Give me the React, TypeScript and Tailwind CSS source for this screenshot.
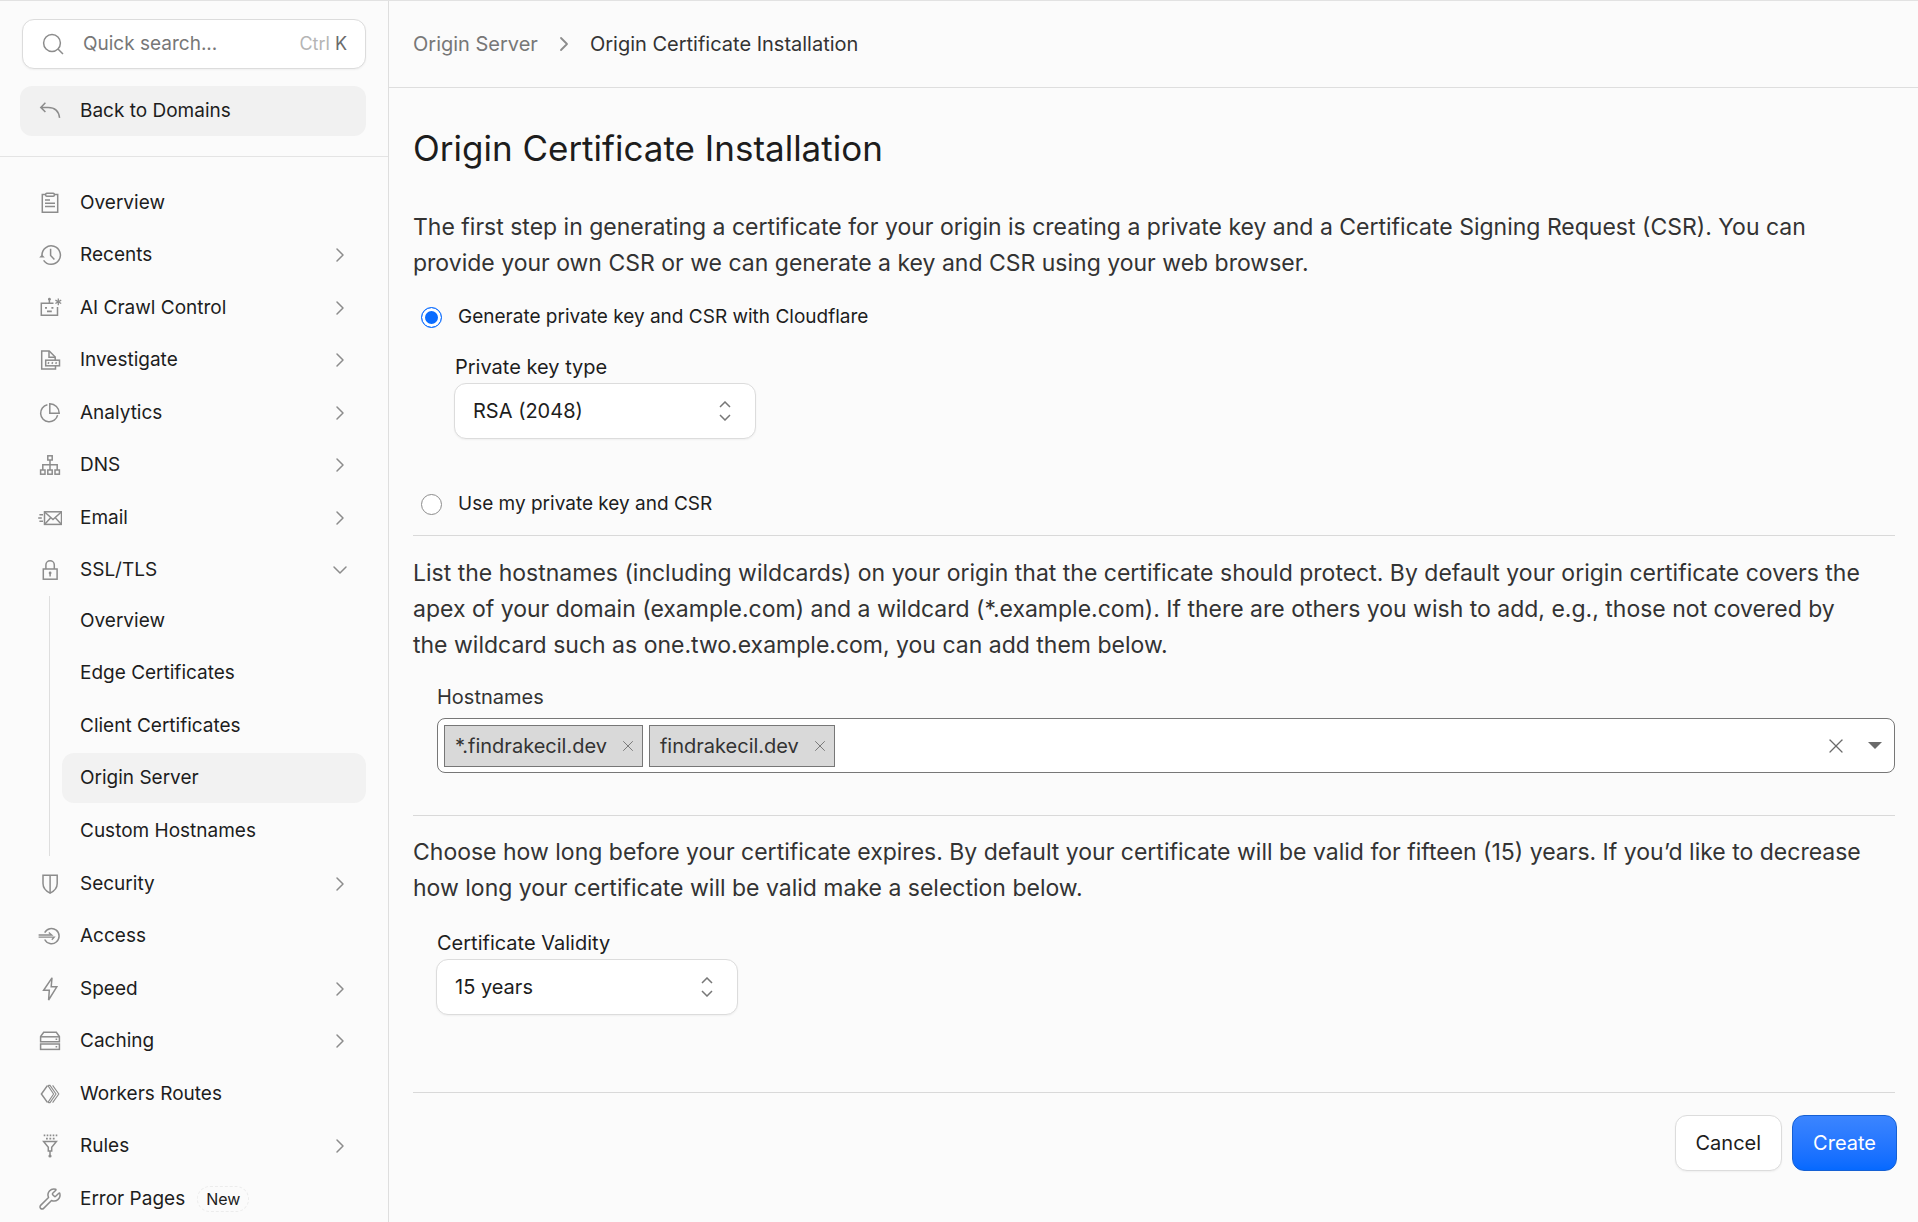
import React, { useState } from 'react';
import { ChevronDown, ChevronRight, Wrench, X } from 'lucide-react';

type IconProps = { children: React.ReactNode };

const Icon = ({ children }: IconProps) => (
  <svg
    className="w-6 h-6 shrink-0 text-[#8c8c8c]"
    viewBox="0 0 24 24"
    fill="none"
    stroke="currentColor"
    strokeWidth="1.5"
    aria-hidden="true"
  >
    {children}
  </svg>
);

const icons = {
  search: (
    <Icon>
      <circle cx="11" cy="11" r="8.4" />
      <path d="M17 17l5 5" />
    </Icon>
  ),
  back: (
    <Icon>
      <path d="M7.4 3.8L2.8 8.4l4.6 4.6M2.8 8.4h7.4c6.4 0 10.6 3.8 11.4 10.4" />
    </Icon>
  ),
  overview: (
    <Icon>
      <path d="M7.7 3.6H4.3v17.6h15.4V3.6h-3.4" />
      <rect x="7.7" y="2.2" width="8.6" height="3" rx="1" />
      <path d="M7 9h5M7 12.3h10M7 15.6h10" />
    </Icon>
  ),
  recents: (
    <Icon>
      <path d="M4 12.5a9.2 9.2 0 1 1 1.6 4.8" />
      <path d="M12.6 5.8v6.6l3.8 4" />
      <path d="M1.2 14.6L4 11.6l2.8 3z" fill="currentColor" stroke="none" />
    </Icon>
  ),
  crawl: (
    <Icon>
      <path d="M15.5 7.3H3.3v12h16.2V11" />
      <path d="M11.4 7.3V3" />
      <circle cx="11.4" cy="3.2" r="1.4" fill="currentColor" stroke="none" />
      <path d="M7 11.8h2M13.4 11.8h2M9 15.4h4.8" strokeWidth="1.8" />
      <path d="M20.3 2.4v6.8M17.4 4.1l5.8 3.4M23.2 4.1l-5.8 3.4" strokeWidth="1.3" />
    </Icon>
  ),
  investigate: (
    <Icon>
      <path d="M17.2 12V9l-6-6H3.7v18h13.8v-3" />
      <path d="M11 3v6.2h6.2" />
      <rect x="7.7" y="12.2" width="13.8" height="5.6" />
      <path d="M10 15.7l1-1.4M13.8 15.7l1-1.4M17.6 15.7l1-1.4" />
    </Icon>
  ),
  analytics: (
    <Icon>
      <path d="M9.4 3.8a8.6 8.6 0 1 0 10.2 10.4" />
      <path d="M11.8 2.8v9.4h9.4a9.4 9.4 0 0 0-9.4-9.4z" />
    </Icon>
  ),
  dns: (
    <Icon>
      <rect x="9.8" y="2.8" width="4.4" height="4.2" />
      <rect x="2.6" y="17" width="4.4" height="4.2" />
      <rect x="9.8" y="17" width="4.4" height="4.2" />
      <rect x="17" y="17" width="4.4" height="4.2" />
      <path d="M12 7v10M4.8 17v-5.3h14.4V17" />
    </Icon>
  ),
  email: (
    <Icon>
      <rect x="6.5" y="5.8" width="17" height="12.6" />
      <path d="M6.7 6l8.3 7.6L23.3 6M6.7 18.2l6-6.4M23.3 18.2l-6-6.4" />
      <path d="M1.4 8.7H5M.2 12h3.6M1.4 15.3H5" />
    </Icon>
  ),
  lock: (
    <Icon>
      <rect x="5.3" y="11" width="13.8" height="10.2" />
      <path d="M7.9 11V7a4.2 4.2 0 0 1 8.4 0v4" />
      <path d="M12.1 15v3.4" />
      <circle cx="12.1" cy="15" r="1.4" fill="currentColor" stroke="none" />
    </Icon>
  ),
  shield: (
    <Icon>
      <path d="M5 3.2h14.2v8.4c0 4.8-3 7.6-7.1 9.6C8 19.2 5 16.4 5 11.6z" />
      <path d="M12.1 3.2v18" />
    </Icon>
  ),
  access: (
    <Icon>
      <path d="M6.7 8.7a7.6 7.6 0 1 1 0 6.8" />
      <path d="M.6 11h13.2l-3-2.6M.6 13.2h15.6l-2.4 2.6" strokeWidth="1.3" />
    </Icon>
  ),
  speed: (
    <Icon>
      <path d="M14 .8L5.6 13.3h5.7L10.6 23l8.2-13.2h-5.6z" />
    </Icon>
  ),
  caching: (
    <Icon>
      <path d="M5.7 3.3h12.6l3.1 4.2v5.2H2.6V7.5z" />
      <path d="M2.6 7.8h18.8" />
      <rect x="2.6" y="15" width="18.8" height="5.4" />
      <path d="M17.6 10.3h1.6M17.6 17.7h1.6" />
    </Icon>
  ),
  workers: (
    <Icon>
      <path d="M9.4 3.6L3.4 12l6 8.4" />
      <path d="M10.4 3.4h1.6l6 8.6-6 8.6h-1.600M14.600 3.400l6.200 8.600-6.200 8.600M9.800 3.400l5.800 8.600-5.800 8.600" strokeWidth="1.1" />
    </Icon>
  ),
  rules: (
    <Icon>
      <path d="M5.7 1.4h13.6" strokeWidth="1.8" strokeDasharray="1.6 1.4" />
      <path d="M8 4.6h9" strokeWidth="1.8" strokeDasharray="1.8 1.6" />
      <path d="M5.6 7.4h12.8l-4.7 5.8v3.9h-3.4v-3.9z" />
      <path d="M12 17v5" />
      <circle cx="12" cy="22" r="1.6" fill="currentColor" stroke="none" />
    </Icon>
  ),
  wrench: <Wrench className="w-6 h-6 shrink-0 text-[#8c8c8c]" strokeWidth={1.5} />,
};

type NavItem = {
  label: string;
  icon: React.ReactNode;
  expandable?: boolean;
  badge?: string;
  children?: string[];
};

const navItems: NavItem[] = [
  { label: 'Overview', icon: icons.overview },
  { label: 'Recents', icon: icons.recents, expandable: true },
  { label: 'AI Crawl Control', icon: icons.crawl, expandable: true },
  { label: 'Investigate', icon: icons.investigate, expandable: true },
  { label: 'Analytics', icon: icons.analytics, expandable: true },
  { label: 'DNS', icon: icons.dns, expandable: true },
  { label: 'Email', icon: icons.email, expandable: true },
  {
    label: 'SSL/TLS',
    icon: icons.lock,
    expandable: true,
    children: ['Overview', 'Edge Certificates', 'Client Certificates', 'Origin Server', 'Custom Hostnames'],
  },
  { label: 'Security', icon: icons.shield, expandable: true },
  { label: 'Access', icon: icons.access },
  { label: 'Speed', icon: icons.speed, expandable: true },
  { label: 'Caching', icon: icons.caching, expandable: true },
  { label: 'Workers Routes', icon: icons.workers },
  { label: 'Rules', icon: icons.rules, expandable: true },
  { label: 'Error Pages', icon: icons.wrench, badge: 'New' },
];

const rowClass = 'flex w-full items-center gap-[18px] h-[50px] px-[18px] rounded-xl text-left hover:bg-[#f2f2f2]';

const NavRow = ({ item }: { item: NavItem }) => {
  const content = (
    <>
      {item.icon}
      <span className="flex items-center gap-3">
        {item.label}
        {item.badge && (
          <span className="px-2 text-base rounded-full border border-dashed border-[#ececec]">{item.badge}</span>
        )}
      </span>
    </>
  );

  if (!item.expandable) {
    return (
      <a href="#" className={rowClass}>
        {content}
      </a>
    );
  }

  return (
    <button type="button" aria-expanded={!!item.children} className={rowClass}>
      {content}
      {item.children ? (
        <ChevronDown size={24} strokeWidth={1.5} className="ml-auto -mr-1 text-[#8c8c8c]" />
      ) : (
        <ChevronRight size={24} strokeWidth={1.5} className="ml-auto -mr-1 text-[#8c8c8c]" />
      )}
    </button>
  );
};

const Sidebar = () => (
  <aside className="flex flex-col w-[389px] shrink-0 border-r border-[#dedede] overflow-y-auto [scrollbar-width:none] text-[19px] leading-7 text-[#1d1d1d]">
    <div className="pl-5 pr-[22px] pt-[18px] pb-5 border-b border-[#e4e4e4]">
      <label className="flex items-center gap-[18px] h-[50px] ml-[2px] px-[18px] rounded-xl bg-white border border-[#dcdcdc] shadow-xs">
        {icons.search}
        <input
          type="text"
          aria-label="Quick search"
          placeholder="Quick search..."
          className="min-w-0 flex-1 bg-transparent outline-none placeholder:text-[#777777]"
        />
        <span className="text-lg text-[#b5b5b5]">
          Ctrl <span className="text-[#6b6b6b]">K</span>
        </span>
      </label>
      <a href="#" className="flex items-center gap-[18px] h-[50px] mt-[17px] pl-[18px] rounded-xl bg-[#f1f1f1]">
        {icons.back}
        <span>Back to Domains</span>
      </a>
    </div>

    <nav className="pl-5 pr-[22px] pt-[21px]">
      <ul>
        {navItems.map((item) => (
          <li key={item.label} className="odd:mb-[2px] even:mb-[3px]">
            <NavRow item={item} />
            {item.children && (
              <ul className="mt-px ml-[29px] pl-3 border-l border-[#dedede]">
                {item.children.map((child) => (
                  <li key={child} className="odd:mb-[2px] even:mb-[3px] last:mb-0">
                    <a
                      href="#"
                      className={`flex items-center h-[50px] pl-[18px] rounded-xl ${
                        child === 'Origin Server' ? 'bg-[#f2f2f2]' : 'hover:bg-[#f2f2f2]'
                      }`}
                    >
                      {child}
                    </a>
                  </li>
                ))}
              </ul>
            )}
          </li>
        ))}
      </ul>
    </nav>
  </aside>
);

type SelectFieldProps = { id: string; label: string; options: string[] };

const SelectField = ({ id, label, options }: SelectFieldProps) => (
  <div className="flex flex-col">
    <label htmlFor={id} className="px-px text-xl leading-8 text-[#1d1d1d]">
      {label}
    </label>
    <div className="relative w-[302px]">
      <select
        id={id}
        className="w-full h-14 pl-[18px] pr-14 appearance-none rounded-xl bg-white border border-[#dcdcdc] shadow-xs text-xl text-[#1d1d1d]"
      >
        {options.map((option) => (
          <option key={option}>{option}</option>
        ))}
      </select>
      <svg
        className="absolute right-[25px] top-[18px] w-3 h-5 text-[#777777] pointer-events-none"
        viewBox="0 0 12 20"
        fill="none"
        stroke="currentColor"
        strokeWidth="1.5"
        aria-hidden="true"
      >
        <path d="M1 6l5-5 5 5M1 14l5 5 5-5" />
      </svg>
    </div>
  </div>
);

const radioClass =
  'appearance-none w-[21px] h-[21px] rounded-full bg-white border border-[#8c8c8c] checked:border-[#0a6cff] checked:bg-[#0a6cff] checked:shadow-[inset_0_0_0_3px_white]';

const Paragraph = ({ children }: { children: React.ReactNode }) => (
  <p className="pr-4 text-[23px] leading-9 text-[#333333]">{children}</p>
);

export default function App() {
  const [keySource, setKeySource] = useState('cloudflare');
  const [hostnames, setHostnames] = useState(['*.findrakecil.dev', 'findrakecil.dev']);

  return (
    <div className="flex h-screen bg-[#fbfbfb] border-t border-[#e2e2e2] font-['Inter',sans-serif] text-[#1d1d1d]">
      <Sidebar />

      <div className="flex flex-col flex-1 min-w-0 overflow-y-auto">
        {/* Breadcrumbs */}
        <header className="flex items-center gap-[14px] h-[87px] shrink-0 px-6 border-b border-[#dedede] text-xl">
          <a href="#" className="text-[#777777]">
            Origin Server
          </a>
          <ChevronRight size={24} strokeWidth={1.8} className="text-[#8c8c8c]" />
          <span className="text-[#333333]">Origin Certificate Installation</span>
        </header>

        <main className="pl-6 pr-[23px] pt-9">
          <h1 className="text-[35px] leading-[48px]">Origin Certificate Installation</h1>

          <form onSubmit={(e) => e.preventDefault()}>
            <section className="pt-[37px] pb-[15px] border-b border-[#d9d9d9]">
              <Paragraph>
                The first step in generating a certificate for your origin is creating a private key and a Certificate
                Signing Request (CSR). You can provide your own CSR or we can generate a key and CSR using your web
                browser.
              </Paragraph>
              <label className="flex items-center gap-4 mt-5 ml-2 h-8 text-[19px] leading-7">
                <input
                  type="radio"
                  name="keySource"
                  className={radioClass}
                  checked={keySource === 'cloudflare'}
                  onChange={() => setKeySource('cloudflare')}
                />
                Generate private key and CSR with Cloudflare
              </label>
              <div className="mt-[18px] ml-[41px]">
                <SelectField id="key-type" label="Private key type" options={['RSA (2048)', 'ECC']} />
              </div>
              <label className="flex items-center gap-4 mt-[49px] ml-2 h-8 text-[19px] leading-7">
                <input
                  type="radio"
                  name="keySource"
                  className={radioClass}
                  checked={keySource === 'own'}
                  onChange={() => setKeySource('own')}
                />
                Use my private key and CSR
              </label>
            </section>

            <section className="pt-[19px] pb-[42px] border-b border-[#d9d9d9]">
              <Paragraph>
                List the hostnames (including wildcards) on your origin that the certificate should protect. By default
                your origin certificate covers the apex of your domain (example.com) and a wildcard (*.example.com). If
                there are others you wish to add, e.g., those not covered by the&nbsp;wildcard such as
                one.two.example.com, you can add them below.
              </Paragraph>
              <div className="mt-[18px] ml-6">
                <label htmlFor="hostnames" className="block text-xl leading-8 text-[#333333]">
                  Hostnames
                </label>
                <div className="flex items-center gap-[6px] h-[55px] mt-[5px] pl-[6px] pr-3 rounded-lg bg-white border border-[#777777]">
                  {hostnames.map((host) => (
                    <span
                      key={host}
                      className="flex items-center gap-3 h-[42px] pl-[10px] pr-[5px] bg-[#d9d9d9] border border-[#777777] text-xl text-[#333333]"
                    >
                      {host}
                      <button
                        type="button"
                        aria-label={`Remove ${host}`}
                        onClick={() => setHostnames(hostnames.filter((h) => h !== host))}
                      >
                        <X size={18} strokeWidth={1.3} className="text-[#777777]" />
                      </button>
                    </span>
                  ))}
                  <input id="hostnames" type="text" className="flex-1 min-w-0 bg-transparent outline-none text-xl" />
                  <button type="button" aria-label="Clear all" className="mr-[14px]" onClick={() => setHostnames([])}>
                    <X size={24} strokeWidth={1.3} className="text-[#6b6b6b]" />
                  </button>
                  <button type="button" aria-label="Show hostnames">
                    <svg width="14" height="7" viewBox="0 0 14 7" fill="#6b6b6b" aria-hidden="true">
                      <path d="M0 0h14L7 7z" />
                    </svg>
                  </button>
                </div>
              </div>
            </section>

            <section className="pt-[18px] pb-[77px] border-b border-[#d9d9d9]">
              <Paragraph>
                Choose how long before your certificate expires. By default your certificate will be valid for fifteen
                (15) years. If you’d like to decrease how long your certificate will be valid make a selection below.
              </Paragraph>
              <div className="mt-[21px] ml-[23px]">
                <SelectField id="validity" label="Certificate Validity" options={['15 years', '10 years', '5 years', '1 year']} />
              </div>
            </section>

            <div className="flex justify-end gap-[10px] -mr-[2px] pt-[22px] pb-12 text-xl">
              <button
                type="button"
                className="h-14 px-5 rounded-xl bg-white border border-[#dcdcdc] shadow-xs"
              >
                Cancel
              </button>
              <button
                type="submit"
                className="h-14 px-5 rounded-xl border border-[#1560d4] bg-linear-to-b from-[#3b85ff] to-[#0569ff] text-white"
              >
                Create
              </button>
            </div>
          </form>
        </main>
      </div>
    </div>
  );
}
